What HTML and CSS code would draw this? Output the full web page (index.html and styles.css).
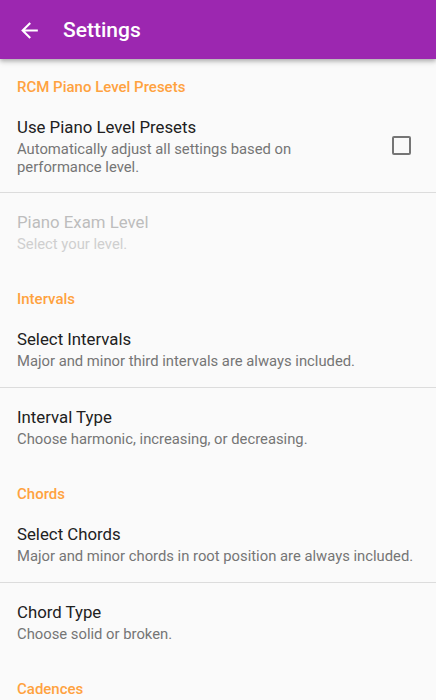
FILE: index.html
```html
<!DOCTYPE html>
<html>
<head>
<meta charset="utf-8">
<link rel="stylesheet" href="styles.css">
</head>
<body>
<header class="appbar">
  <svg class="back" viewBox="0 0 24 24" width="25" height="25"><path fill="#fff" d="M20 11H7.83l5.59-5.59L12 4l-8 8 8 8 1.41-1.41L7.83 13H20v-2z"/></svg>
  <div class="title">Settings</div>
</header>
<main class="list">
  <div class="category first">RCM Piano Level Presets</div>
  <div class="item with-widget">
    <div class="texts">
      <div class="item-title">Use Piano Level Presets</div>
      <div class="summary">Automatically adjust all settings based on performance level.</div>
    </div>
    <div class="checkbox"></div>
  </div>
  <div class="divider"></div>
  <div class="item disabled">
    <div class="item-title">Piano Exam Level</div>
    <div class="summary">Select your level.</div>
  </div>

  <div class="category">Intervals</div>
  <div class="item">
    <div class="item-title">Select Intervals</div>
    <div class="summary">Major and minor third intervals are always included.</div>
  </div>
  <div class="divider"></div>
  <div class="item">
    <div class="item-title">Interval Type</div>
    <div class="summary">Choose harmonic, increasing, or decreasing.</div>
  </div>

  <div class="category">Chords</div>
  <div class="item">
    <div class="item-title">Select Chords</div>
    <div class="summary">Major and minor chords in root position are always included.</div>
  </div>
  <div class="divider"></div>
  <div class="item">
    <div class="item-title">Chord Type</div>
    <div class="summary">Choose solid or broken.</div>
  </div>

  <div class="category">Cadences</div>
</main>
</body>
</html>
```
FILE: styles.css
```css
* { box-sizing: border-box; }
html, body { margin: 0; padding: 0; }
body {
  background: #fafafa;
  font-family: Roboto, "Noto Sans", sans-serif;
  width: 436px;
  height: 700px;
  overflow: hidden;
}
.appbar {
  position: relative;
  z-index: 2;
  height: 59px;
  background: #9c27b0;
  display: flex;
  align-items: center;
  padding-left: 17px;
  box-shadow: 0 2px 4px rgba(0,0,0,0.25), 0 4px 6px rgba(0,0,0,0.08);
}
.back { display: block; margin-top: 1px; }
.title {
  color: #fff;
  font-size: 21px;
  font-weight: 500;
  margin-left: 21px;
  margin-top: 1px;
}
.list { display: flex; flex-direction: column; }
.category {
  color: #ffa23f;
  font-size: 15px;
  font-weight: 500;
  line-height: 20px;
  padding: 19px 17px 1px;
}
.category.first { padding-top: 18px; }
.item {
  padding: 18px 17px 16px;
  min-height: 77px;
}
.item.with-widget {
  display: flex;
  align-items: center;
  padding-right: 25px;
  padding-bottom: 16px;
}
.texts { flex: 1; padding-right: 60px; }
.item-title {
  font-size: 16.8px;
  line-height: 22px;
  color: #212121;
}
.summary {
  font-size: 14.8px;
  line-height: 19px;
  color: #757575;
  margin-top: 2px;
}
.with-widget .summary { line-height: 18px; margin-top: 2px; }
.disabled .item-title { color: #bdbdbd; }
.disabled .summary { color: #cfcfcf; }
.checkbox {
  width: 19px;
  height: 19px;
  border: 2px solid #757575;
  border-radius: 2px;
  margin-top: -1px;
}
.divider { height: 1px; background: #dcdcdc; }
```
